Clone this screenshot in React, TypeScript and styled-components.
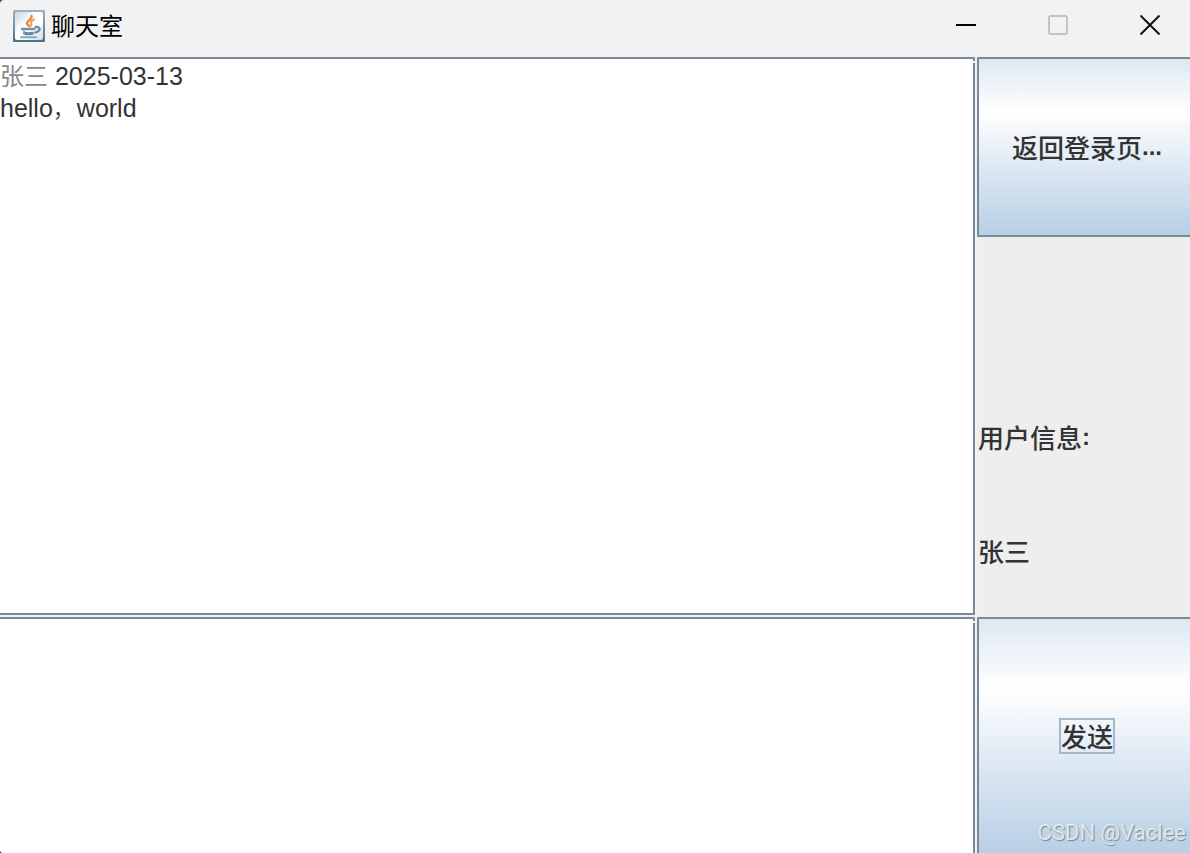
import React from "react";
import styled, { createGlobalStyle } from "styled-components";

const LINE = "#7a8a99";
const SANS = `"Liberation Sans", "Noto Sans CJK SC", sans-serif`;

const GlobalStyle = createGlobalStyle`
  * { box-sizing: border-box; }
  body { margin: 0; background: #3c3c3c; }
`;

const Window = styled.div`
  position: relative;
  display: flex;
  flex-direction: column;
  min-height: 100vh;
  overflow: hidden;
  border-radius: 4px 0 0 4px;
  background: #f2f2f2;
  color: #333;
  font-family: ${SANS};
`;

const TitleBar = styled.header`
  display: flex;
  align-items: center;
  height: 57px;
  padding: 0 0 5px 13px;
`;

const Title = styled.h1`
  flex: 1;
  margin: 0 0 2px 6px;
  color: #000;
  font-family: "Noto Sans CJK SC", sans-serif;
  font-size: 24px;
  font-weight: 400;
  line-height: 32px;
`;

const WindowControls = styled.div`
  display: flex;
  gap: 12px;
  margin-bottom: 2px;
`;

const ControlButton = styled.button`
  display: flex;
  align-items: center;
  justify-content: center;
  width: 80px;
  height: 50px;
  padding: 0;
  border: 0;
  background: none;
`;

const Content = styled.main`
  flex: 1;
  display: grid;
  grid-template-columns: minmax(0, 1fr) 213px;
  grid-template-rows: minmax(560px, 1fr) 236px;
  column-gap: 2px;
`;

const ScrollPane = styled.section<{ $closed?: boolean }>`
  position: relative;
  display: flex;
  flex-direction: column;
  border: 0 solid ${LINE};
  border-top-width: 2px;
  border-right-width: 2px;
  border-bottom-width: ${(p) => (p.$closed ? 2 : 0)}px;
  margin-bottom: ${(p) => (p.$closed ? 2 : 0)}px;
  background: #fff;

  &::after {
    content: "";
    position: absolute;
    top: 2px;
    right: -2px;
    width: 2px;
    height: 2px;
    background: #f2f2f2;
  }
`;

const Message = styled.p`
  margin: 0;
  padding-top: 1px;
  font-size: 25px;
  line-height: 32px;
  white-space: pre-line;
`;

const Han = styled.span<{ $muted?: boolean }>`
  font-family: "Noto Sans CJK SC", sans-serif;
  font-size: 24px;
  line-height: 24px;
  font-weight: ${(p) => (p.$muted ? 400 : 300)};
  color: ${(p) => (p.$muted ? "#888" : "inherit")};
`;

const Draft = styled.textarea`
  flex: 1;
  width: 100%;
  padding: 1px 0;
  border: 0;
  outline: 0;
  resize: none;
  background: #fff;
  color: #333;
  font: 25px/32px ${SANS};
`;

const SidePanel = styled.aside`
  display: flex;
  flex-direction: column;
  background: #eee;
`;

const MetalButton = styled.button<{ $closed?: boolean }>`
  flex: ${(p) => (p.$closed ? "0 0 180px" : "1")};
  display: flex;
  align-items: center;
  justify-content: center;
  padding: 0 0 0 5px;
  border: 0 solid ${LINE};
  border-top-width: 2px;
  border-left-width: 2px;
  border-bottom-width: ${(p) => (p.$closed ? 2 : 0)}px;
  background: linear-gradient(#dde8f3, #fff 30%, #dde8f3 62%, #b8cfe5);
  color: #333;
  font: 500 26px/32px "Noto Sans CJK SC", sans-serif;
`;

const Dots = styled.span`
  font: 700 24px/32px ${SANS};
`;

const FocusRing = styled.span`
  border: 2px solid #a3b8cc;
`;

const UserInfo = styled.div`
  flex: 1;
  display: flex;
  flex-direction: column;
  justify-content: flex-end;
  padding: 0 0 9px 1px;
`;

const Label = styled.div`
  display: flex;
  align-items: center;
  height: 114px;
  font: 500 26px/32px "Noto Sans CJK SC", sans-serif;
`;

const Watermark = styled.span`
  position: absolute;
  right: 4px;
  bottom: 7px;
  color: rgba(235, 238, 242, 0.9);
  font: 22px/26px Roboto, sans-serif;
  text-shadow: 1px 1px 1px rgba(70, 85, 100, 0.6);
  pointer-events: none;
`;

function JavaIcon() {
  return (
    <svg width="32" height="32" viewBox="0 0 32 32" aria-hidden="true">
      <defs>
        <linearGradient id="frame" x1="0" y1="0" x2="0" y2="1">
          <stop offset="0" stopColor="#a0b3c0" />
          <stop offset="1" stopColor="#4c7089" />
        </linearGradient>
        <linearGradient id="plate" x1="0" y1="0" x2="1" y2="1">
          <stop offset="0" stopColor="#c6d4df" />
          <stop offset="0.4" stopColor="#fff" />
          <stop offset="0.65" stopColor="#fff" />
          <stop offset="1" stopColor="#cfd8df" />
        </linearGradient>
      </defs>
      <rect width="32" height="32" rx="1" fill="url(#frame)" />
      <rect x="2" y="2" width="28" height="28" rx="2" fill="url(#plate)" />
      <g fill="none" strokeLinecap="round">
        <path d="M18.500 6c1 3.500-5 5-4.500 7.500.3 1.500 1.500 1.500 2 2.500" stroke="#f09038" strokeWidth="2.600" />
        <path d="M21 9.500c-3 1.500-3.500 3-2.500 4.500 .3 1-.5 1.500-1 2" stroke="#eda05a" strokeWidth="2" />
        <path d="M9 19h12.500" stroke="#6a93b0" strokeWidth="2.400" />
        <path d="M11.500 23.300c2 .5 6 .5 8 0" stroke="#5f8aa8" strokeWidth="3" />
        <path d="M10.500 20l1 3" stroke="#8aa9be" strokeWidth="1.500" />
        <path d="M22.500 17c5.500-.5 5.500 4 0 5.500" stroke="#6a91ad" strokeWidth="2.400" />
        <path d="M8 27.300h15" stroke="#86a6bd" strokeWidth="2" />
      </g>
    </svg>
  );
}

export default function App() {
  return (
    <>
      <GlobalStyle />
      <Window>
        <TitleBar>
          <JavaIcon />
          <Title>聊天室</Title>
          <WindowControls>
            <ControlButton aria-label="最小化">
              <svg width="20" height="20" viewBox="0 0 20 20">
                <path d="M0 10h20" stroke="#000" strokeWidth="2" />
              </svg>
            </ControlButton>
            <ControlButton aria-label="最大化" disabled>
              <svg width="20" height="20" viewBox="0 0 20 20">
                <rect x="1" y="1" width="18" height="18" rx="1.500" fill="none" stroke="#c3c3c3" strokeWidth="2" />
              </svg>
            </ControlButton>
            <ControlButton aria-label="关闭">
              <svg width="20" height="20" viewBox="0 0 20 20">
                <path d="M.5.5l19 19M19.500.5l-19 19" stroke="#111" strokeWidth="2" />
              </svg>
            </ControlButton>
          </WindowControls>
        </TitleBar>
        <Content>
          <ScrollPane $closed>
            <Message>
              <Han $muted>张三</Han> 2025-03-13{"\n"}hello<Han>，</Han>world
            </Message>
          </ScrollPane>
          <SidePanel>
            <MetalButton $closed>
              返回登录页<Dots>...</Dots>
            </MetalButton>
            <UserInfo>
              <Label>
                用户信息<Dots>:</Dots>
              </Label>
              <Label>张三</Label>
            </UserInfo>
          </SidePanel>
          <ScrollPane>
            <Draft aria-label="消息" />
          </ScrollPane>
          <SidePanel>
            <MetalButton>
              <FocusRing>发送</FocusRing>
            </MetalButton>
          </SidePanel>
        </Content>
        <Watermark>CSDN @Vaclee</Watermark>
      </Window>
    </>
  );
}
